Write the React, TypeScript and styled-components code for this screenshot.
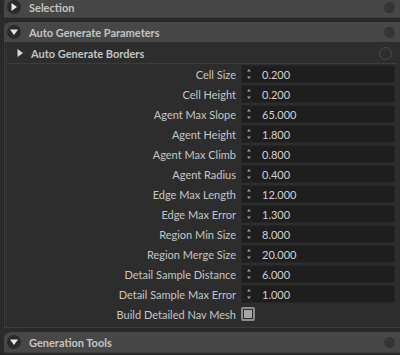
import React from "react";
import styled, { createGlobalStyle } from "styled-components";

const Global = createGlobalStyle`
  html, body { margin: 0; padding: 0; background: #2a2a2a; }
  body { font-family: "Lato", "Noto Sans", sans-serif; }
`;

const Page = styled.div`
  width: 400px;
  height: 355px;
  overflow: hidden;
  background: #2a2a2a;
  display: flex;
  flex-direction: column;
`;

const Stack = styled.div`
  margin-top: -3px;
  display: flex;
  flex-direction: column;
  gap: 4px;
`;

const Section = styled.div`
  margin-left: 4px;
  border-left: 1px solid #3a3a3a;
  border-bottom: 1px solid #3e3e3e;
  display: flex;
  flex-direction: column;
`;

const Header = styled.div`
  height: 20px;
  background: #474747;
  border-top-left-radius: 7px;
  margin-left: -1px;
  display: flex;
  align-items: center;
  padding-left: 3px;
  padding-right: 5px;
  gap: 8px;
`;

const Bullet = styled.div`
  width: 14px;
  height: 14px;
  border-radius: 50%;
  background: #2b2b2b;
  display: flex;
  align-items: center;
  justify-content: center;
`;

const HeaderTitle = styled.span`
  flex: 1;
  font-size: 11px;
  font-weight: 700;
  color: #c4c4c4;
`;

const Dot = styled.div`
  width: 11px;
  height: 11px;
  border-radius: 50%;
  background: #353535;
`;

const Body = styled.div`
  background: #2d2d2d;
  display: flex;
  flex-direction: column;
  padding-bottom: 3px;
  border-left: 1px solid #353535;
  margin-left: 1px;
`;

const SubHeader = styled.div`
  height: 20px;
  margin-top: 1px;
  margin-right: 4px;
  display: flex;
  align-items: center;
  padding-left: 10px;
  padding-right: 4px;
  gap: 8px;
  border-bottom: 1px solid #3c3c3c;
`;

const SubTitle = styled.span`
  flex: 1;
  font-size: 11px;
  font-weight: 700;
  color: #c4c4c4;
`;

const Ring = styled.div`
  width: 11px;
  height: 11px;
  border-radius: 50%;
  border: 1px solid #4a4a4a;
`;

const Rows = styled.div`
  display: flex;
  flex-direction: column;
`;

const Row = styled.div`
  height: 20px;
  display: grid;
  grid-template-columns: 229px 154px;
  column-gap: 5px;
  align-items: center;
`;

const Label = styled.span`
  text-align: right;
  font-size: 11px;
  color: #c6c6c6;
  white-space: nowrap;
`;

const Field = styled.div`
  height: 18px;
  box-sizing: border-box;
  background: #1e1e1e;
  border: 1px solid #262626;
  display: flex;
  align-items: center;
  padding-left: 4px;
  gap: 10px;
`;

const Value = styled.span`
  font-size: 11px;
  color: #d2d2d2;
`;

const Check = styled.div`
  width: 14px;
  height: 14px;
  box-sizing: border-box;
  border: 2px solid #8c8c8c;
  border-radius: 2px;
  display: flex;
  align-items: center;
  justify-content: center;
`;

const CheckFill = styled.div`
  width: 8px;
  height: 8px;
  background: #a6a6a6;
`;

const TriRight = ({ color = "#e8e8e8" }: { color?: string }) => (
  <svg width="6" height="8" viewBox="0 0 6 8">
    <path d="M0.5 0 L6 4 L0.5 8 Z" fill={color} />
  </svg>
);

const TriDown = () => (
  <svg width="8" height="6" viewBox="0 0 8 6">
    <path d="M0 0.5 L8 0.5 L4 6 Z" fill="#e8e8e8" />
  </svg>
);

const Spinner = () => (
  <svg width="6" height="14" viewBox="0 0 6 14">
    <path d="M3 2 L5 4.5 L1 4.5 Z" fill="#a0a0a0" />
    <path d="M1 9.5 L5 9.5 L3 12 Z" fill="#a0a0a0" />
  </svg>
);

const params: [string, string][] = [
  ["Cell Size", "0.200"],
  ["Cell Height", "0.200"],
  ["Agent Max Slope", "65.000"],
  ["Agent Height", "1.800"],
  ["Agent Max Climb", "0.800"],
  ["Agent Radius", "0.400"],
  ["Edge Max Length", "12.000"],
  ["Edge Max Error", "1.300"],
  ["Region Min Size", "8.000"],
  ["Region Merge Size", "20.000"],
  ["Detail Sample Distance", "6.000"],
  ["Detail Sample Max Error", "1.000"],
];

export default function App() {
  return (
    <Page>
      <Global />
      <Stack>
        <Section>
          <Header>
            <Bullet>
              <TriRight />
            </Bullet>
            <HeaderTitle>Selection</HeaderTitle>
            <Dot />
          </Header>
        </Section>
        <Section>
          <Header>
            <Bullet>
              <TriDown />
            </Bullet>
            <HeaderTitle>Auto Generate Parameters</HeaderTitle>
            <Dot />
          </Header>
          <Body>
            <SubHeader>
              <TriRight color="#d8d8d8" />
              <SubTitle>Auto Generate Borders</SubTitle>
              <Ring />
            </SubHeader>
            <Rows>
              {params.map(([label, value]) => (
                <Row key={label}>
                  <Label>{label}</Label>
                  <Field>
                    <Spinner />
                    <Value>{value}</Value>
                  </Field>
                </Row>
              ))}
              <Row>
                <Label>Build Detailed Nav Mesh</Label>
                <Check>
                  <CheckFill />
                </Check>
              </Row>
            </Rows>
          </Body>
        </Section>
        <Section>
          <Header>
            <Bullet>
              <TriDown />
            </Bullet>
            <HeaderTitle>Generation Tools</HeaderTitle>
            <Dot />
          </Header>
        </Section>
      </Stack>
    </Page>
  );
}
